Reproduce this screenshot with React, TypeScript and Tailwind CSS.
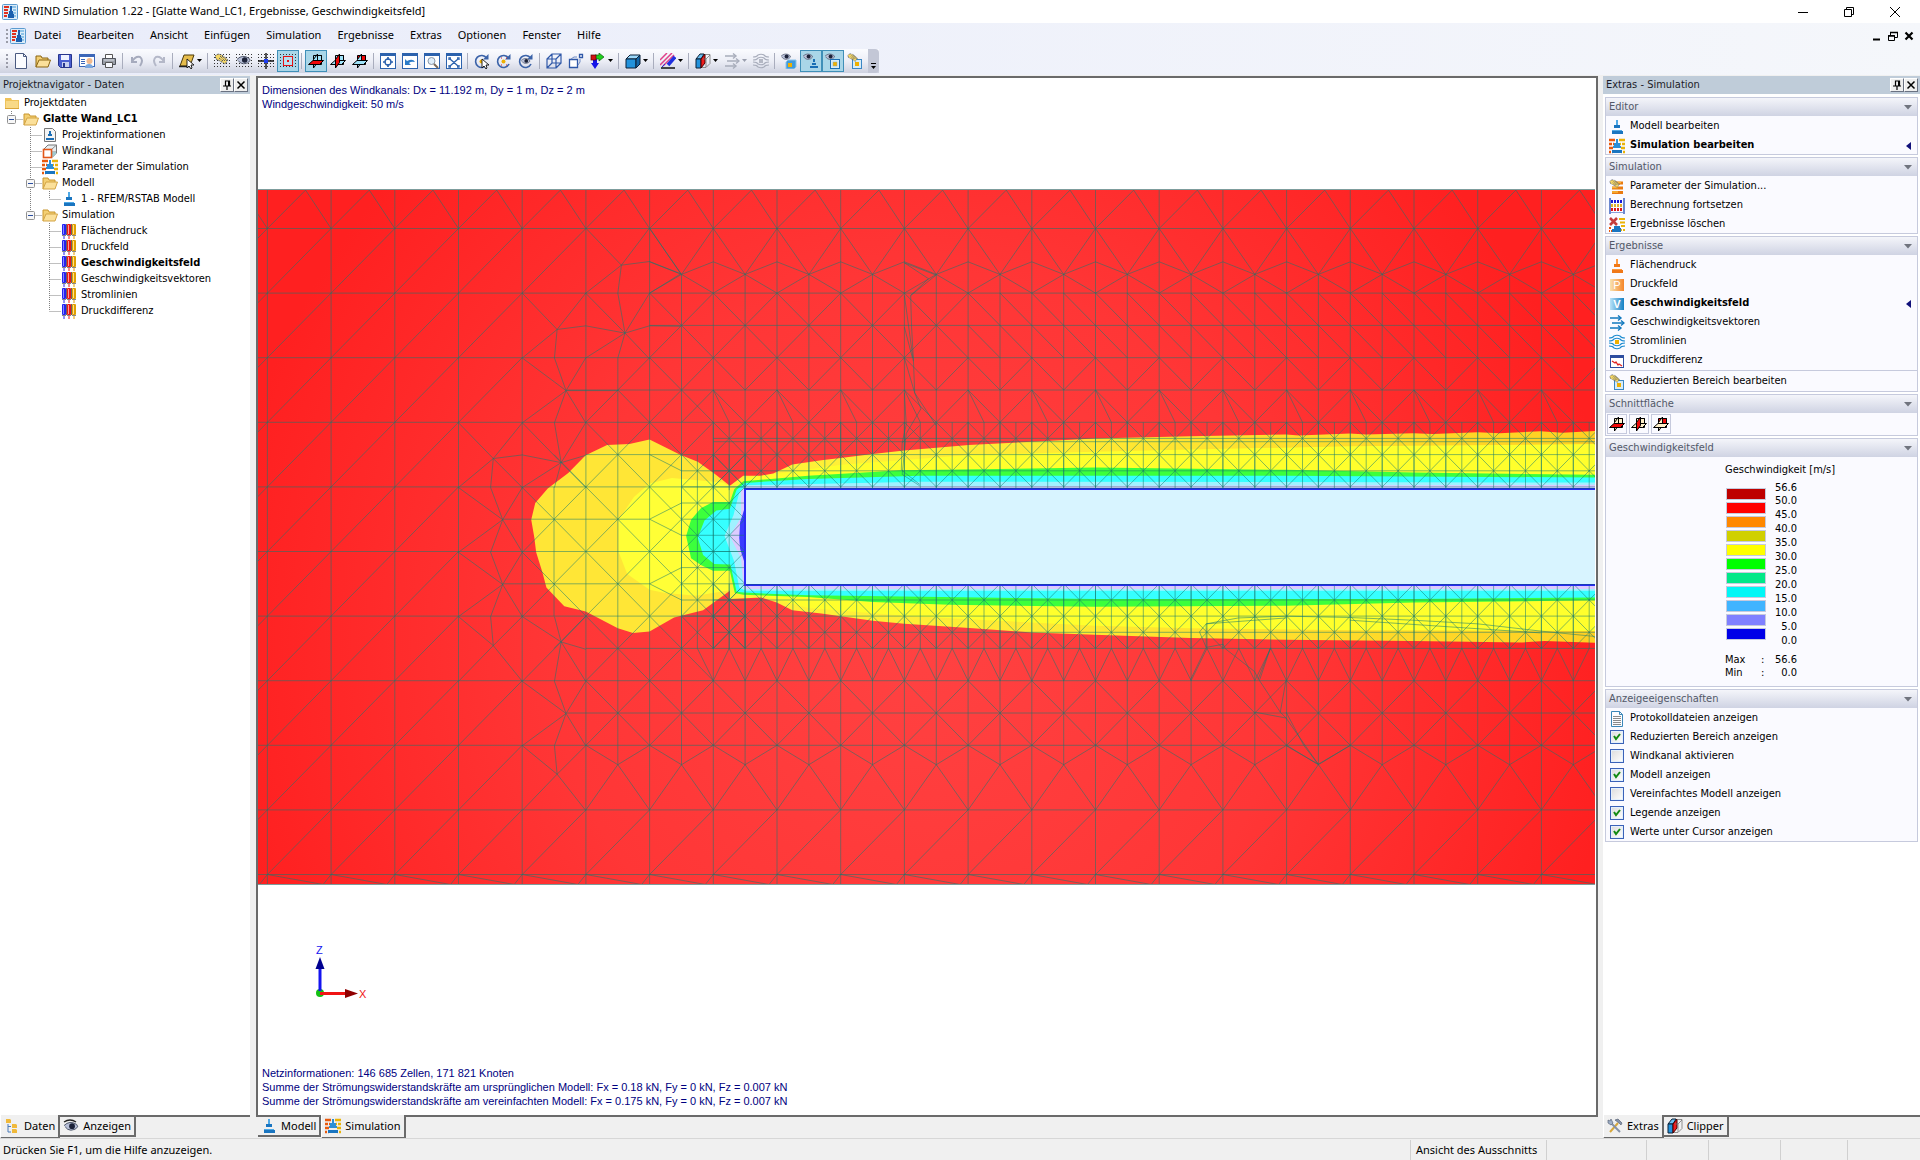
import type { ReactNode } from "react";

/* ---------- icons ---------- */

function Svg({ children, className = "size-4" }: { children: ReactNode; className?: string }) {
  return (
    <svg viewBox="0 0 16 16" className={"shrink-0 " + className} aria-hidden="true">
      {children}
    </svg>
  );
}

function AppLogo() {
  return (
    <Svg>
      <rect x="0.5" y="0.5" width="15" height="15" rx="1" fill="#dcecf8" stroke="#5b9bd0" />
      <path d="M2 3h5M2 6h4M2 9h4M2 12h3" stroke="#e0301e" strokeWidth="2" />
      <path d="M10 3h4M11 6h3M11 9h3M12 12h2" stroke="#8fc4e8" strokeWidth="2" />
      <path d="M8 2h2v5h1v3h1v4H6v-4h1V7h1z" fill="#1b5fae" />
    </Svg>
  );
}
function Pedestal({ color = "#1a75c0", light = "#4fa9e6" }: { color?: string; light?: string }) {
  return (
    <Svg>
      <rect x="7" y="1" width="2" height="5" fill={light} />
      <rect x="5" y="6" width="6" height="3" fill={color} />
      <path d="M3 11h10v1h1v3H3z" fill={color} />
      <rect x="3" y="11" width="10" height="1" fill={light} />
    </Svg>
  );
}
function Bricks() {
  return (
    <Svg>
      <path d="M0 2h6M0 6h3M4 6h1M0 10h4M0 14h2M3 14h1" stroke="#e8590c" strokeWidth="2.4" />
      <path d="M10 2h6M11 6h1M13 6h3M12 10h4M12 14h1M14 14h2" stroke="#eab308" strokeWidth="2.4" />
      <path d="M7 1h2v4h2v3h1v2H4V8h1V5h2z" fill="#2b8fd8" />
      <rect x="3" y="12" width="10" height="3" fill="#1a75c0" />
    </Svg>
  );
}
function FolderClosed() {
  return (
    <Svg>
      <path d="M1 3h6l1 2h7v9H1z" fill="#efc35a" />
      <path d="M2 6h12v8H2z" fill="#f8d987" />
      <path d="M1 13h14v1H1z" fill="#d9a53a" />
    </Svg>
  );
}
function FolderOpen({ strong = false }: { strong?: boolean }) {
  return (
    <Svg>
      <path d="M1 14V3h5l1 2h6v3" fill="#f3cf73" stroke={strong ? "#8a6510" : "#c9962f"} />
      <path d="M1 14 4 7h11.5L13 14z" fill="#fbe09a" stroke={strong ? "#8a6510" : "#d3a445"} />
    </Svg>
  );
}
function Spools() {
  return (
    <Svg>
      {[
        ["#2424f0", "#8a8aff", 1],
        ["#f01414", "#ff9a9a", 6],
        ["#e0a000", "#ffe08a", 11],
      ].map(([c, l, x]) => (
        <g key={String(x)}>
          <rect x={Number(x)} y="1" width="4" height="11" rx="1" fill={String(c)} />
          <rect x={Number(x) + 1} y="2" width="1" height="9" fill={String(l)} />
          <rect x={Number(x)} y="12" width="4" height="1" fill="#888" />
          <path d={`M${Number(x) + 2} 13v3`} stroke={String(c)} />
        </g>
      ))}
      <path d="M5.500 1v11M10.500 1v11" stroke="#222" strokeWidth="0.700" />
    </Svg>
  );
}
function Page({ lines = false, edge = "#4a5a80" }: { lines?: boolean; edge?: string }) {
  return (
    <Svg>
      <path d="M2.500 0.500h8l3 3v12h-11z" fill="#fbfcff" stroke={edge} />
      <path d="M10.500 0.500v3h3" fill="none" stroke={edge} />
      {lines && <path d="M4 5.500h8M4 7.500h8M4 9.500h8M4 11.500h8M4 13.500h8" stroke="#8a8a8a" />}
    </Svg>
  );
}
function PageInfo() {
  return (
    <Svg>
      <path d="M2.500 1.500h8l3 3v10h-11z" fill="#f4f4f4" stroke="#777" />
      <path d="M7 4h2v3h1v2H6V7h1zM4 11h8v2H4z" fill="#1a6db4" />
    </Svg>
  );
}
function WindTunnel() {
  return (
    <Svg>
      <path d="M1.500 6.500 6 2h8.500v8L10 14.500" fill="#e8eef0" stroke="#777" />
      <path d="M9.500 6.500 14.500 2M3 13l5-4h6" stroke="#888" fill="none" />
      <path d="M10 14v-5h4v2z" fill="#9fc9cf" />
      <rect x="1.500" y="6.500" width="8" height="8" fill="#fff" stroke="#e2571a" strokeWidth="1.600" />
    </Svg>
  );
}
const HAND = "M1 3 4 1l4 1 6 5-3 4-5-3-4-2z";
function HandShape() {
  return (
    <g>
      <path d={HAND} fill="#f5d765" />
      <path d={HAND} fill="none" stroke="#20305c" strokeDasharray="1 1" />
      <path d="m6 3 5 5M8 3l5 5M5 5l4 3" stroke="#20305c" strokeDasharray="1 1" />
    </g>
  );
}
function EyeShape() {
  return (
    <g>
      <path d="M0 4q5-5 11-1l1 2q-2 3-6 3-3 0-5-3" fill="#b8c0d8" stroke="#444c60" strokeWidth="0.800" />
      <circle cx="7" cy="4.500" r="2.500" fill="#1c2238" />
    </g>
  );
}
function Dots() {
  return (
    <path
      d="M0 1.500h16M0 4.500h16M0 7.500h16M0 10.500h16M0 13.500h16"
      stroke="#333"
      strokeDasharray="1 2"
    />
  );
}
function HandGrid() {
  return <Svg><Dots /><HandShape /></Svg>;
}
function EyeGrid() {
  return <Svg><Dots /><g transform="translate(1 2) scale(1.1)"><EyeShape /></g></Svg>;
}
function CrossGrid() {
  return <Svg><Dots /><path d="M8 0v16M0 8h16" stroke="#111" strokeWidth="1.400" /><rect x="6" y="6" width="4" height="4" fill="#1d3df0" /></Svg>;
}
function SnapGrid() {
  return <Svg><Dots /><rect x="3" y="3" width="10" height="10" fill="#b8ddee" /><rect x="3.500" y="3.500" width="9" height="9" fill="none" stroke="#e81010" /><rect x="7" y="7" width="2" height="2" fill="#e81010" /></Svg>;
}
const PLANES = ["M0.500 11.500 5 7.500h10.500l-4 4z", "M5.500 6.500 9.500 1v8.500l-4 5.500z", "M5.500 2.500h8v9h-8z"];
function Planes({ hot, base = "#9fe2f8" }: { hot: number; base?: string }) {
  const order = [2, 1, 0].filter((n) => n !== hot).concat(hot === 2 ? [] : [hot]);
  return (
    <Svg>
      {hot === 2 && <path d={PLANES[2]} fill="#f00808" stroke="#000" />}
      {order.map((n) => (
        <path key={n} d={PLANES[n]} fill={n === hot ? "#f00808" : base} stroke="#000" />
      ))}
      <path d="M9.500 2.500h4v5" fill="none" stroke="#000" />
    </Svg>
  );
}
function Save() {
  return <Svg><path d="M1.500 1.500h13v13h-11l-2-2z" fill="#4a5fd0" stroke="#26358c" /><rect x="4" y="2" width="8" height="5" fill="#eef2ff" /><rect x="5" y="9" width="7" height="5" fill="#c8d0f0" /><rect x="6" y="10" width="2" height="4" fill="#26358c" /></Svg>;
}
function Report() {
  return <Svg><rect x="0.500" y="1.500" width="15" height="12" fill="#fff" stroke="#3b66b8" /><path d="M1 3h14" stroke="#3b66b8" strokeWidth="2" /><path d="M2 6.500h4M2 8.500h4M2 10.500h4" stroke="#3b66b8" /><path d="M6 15q0-4 4-4t4 4z" fill="#7ba7dd" /><circle cx="10.500" cy="8" r="3" fill="#f1b98c" /></Svg>;
}
function Printer() {
  return <Svg><path d="M4.500 1.500h7v4h-7z" fill="#fff" stroke="#555" /><path d="M1.500 5.500h13v6h-13z" fill="#9a9fa8" stroke="#50545c" /><path d="M4.500 9.500h7v5h-7z" fill="#f7f9ff" stroke="#555" /><path d="M3 7h10" stroke="#d9dde4" /></Svg>;
}
function Undo() {
  return <Svg><path d="M3 4v5h5M3 9q3-6 8-5 4 3 0 9" fill="none" stroke="#a6abbd" strokeWidth="2" /></Svg>;
}
function Redo() {
  return <Svg><path d="M13 4v5H8M13 9q-3-6-8-5-4 3 0 9" fill="none" stroke="#b4b8c8" strokeWidth="2" /></Svg>;
}
function Cursor() {
  return <path d="M8 6v9l2-2 2 3 1-1-1-3h3z" fill="#fff" stroke="#111" strokeWidth="0.900" />;
}
function WorkPlane() {
  return <Svg><path d="M5 2h10l-4 11H1z" fill="#e6bd4c" stroke="#4d3b08" /><path d="M0 13.500h13" stroke="#222" strokeWidth="1.500" /><Cursor /></Svg>;
}
function Frame({ children }: { children: ReactNode }) {
  return <Svg><rect x="0.500" y="0.500" width="15" height="15" fill="#fff" stroke="#2c62ad" /><rect x="0" y="0" width="16" height="3" fill="#2c62ad" />{children}</Svg>;
}
function Fit() {
  return <Frame><circle cx="8" cy="9" r="3" fill="none" stroke="#2c62ad" strokeWidth="1.300" /><path d="M8 4v3M8 11v3M3 9h3M10 9h3" stroke="#2c62ad" strokeWidth="1.700" /></Frame>;
}
function ViewBack() {
  return <Frame><path d="M3 6v6h6l-2-2q2-2 6-1-2-4-8-1z" fill="#2c7cc9" /></Frame>;
}
function ZoomView() {
  return <Frame><circle cx="7.500" cy="8" r="3.500" fill="#dfeefa" stroke="#8a97a8" /><path d="m10 11 4 4" stroke="#7a6a5a" strokeWidth="2" /></Frame>;
}
function Extents() {
  return <Frame><path d="M3 7V5h2M11 5h2v2M13 12v2h-2M5 14H3v-2M4 6l8 7M12 6l-8 7" stroke="#2c62ad" strokeWidth="1.300" fill="none" /></Frame>;
}
function Rotate({ kind }: { kind: number }) {
  return (
    <Svg>
      <path d="M12.500 5A6 6 0 1 0 13 11" fill="none" stroke="#3a62a8" strokeWidth="1.600" />
      <path d="M14.500 1v5.500H9z" fill="#3a62a8" />
      {kind === 2 ? <g transform="translate(3 4.500) scale(0.75)"><EyeShape /></g> : <circle cx="7.500" cy="8.500" r="2" fill="#f0b000" />}
      {kind === 0 && <Cursor />}
      {kind === 1 && <path d="M5 5h1M10 5h1M5 12h1M10 12h1" stroke="#d02020" />}
    </Svg>
  );
}
function WireCube() {
  return <Svg><path d="M1 6h9v9H1zM6 1h9v9H6zM1 6l5-5M10 6l5-5M1 15l5-5M10 15l5-5" fill="none" stroke="#2f58a8" strokeWidth="1.200" /></Svg>;
}
function TwoCubes() {
  return <Svg><path d="M1.500 6.500h8v8h-8z" fill="#fff" stroke="#2f58a8" strokeWidth="1.300" /><path d="M11.500 1.500h3v3h-3z" fill="#fff" stroke="#2f58a8" strokeWidth="1.300" /><path d="M3 6 6 4h3M10 12l2-3V6" stroke="#6d8ac4" fill="none" /></Svg>;
}
function AxesArrows() {
  return <Svg><path d="M5 2h4v-2l5 4-5 4V6H5z" fill="#1ed01e" stroke="#116011" strokeWidth="0.700" /><path d="M3 6h4v4h2l-4 6-4-6h2z" fill="#1515e8" /><rect x="1" y="2" width="5" height="5" fill="#d41414" stroke="#500" strokeWidth="0.700" /></Svg>;
}
function SolidCube() {
  return <Svg><path d="M1 6 5 2h10l-4 4z" fill="#9bd8fa" stroke="#0b2038" /><path d="M1 6h10v9H1z" fill="#2292dc" stroke="#0b2038" /><path d="m11 6 4-4v9l-4 4z" fill="#1467a8" stroke="#0b2038" /></Svg>;
}
function Hatch() {
  return <Svg><path d="m0 7 7-7M0 12 12 0M3 13 14 2" stroke="#e0408a" strokeWidth="1.500" /><path d="m8 12 7-8" stroke="#2030e0" strokeWidth="3.500" /><path d="M1 15h14" stroke="#111" strokeWidth="1.500" /><path d="m2 14 3-3" stroke="#2030e0" /></Svg>;
}
function Clipper() {
  return <Svg><path d="M1 6 5 1h4L6 6z" fill="#6cc0f0" stroke="#0b2038" /><path d="M1 6h5v9H1z" fill="#2292dc" stroke="#0b2038" /><path d="m6 6 4-5v9l-4 5z" fill="#f01c1c" stroke="#400" /><path d="M10 1.500h5v9l-4 4H7M15 2l-4 4v8M11 6H8" fill="none" stroke="#777" strokeWidth="0.800" /></Svg>;
}
function Vectors({ color = "#1178be" }: { color?: string }) {
  return <Svg><path d="M1 3h10M3 8h12M1 13h10" stroke={color} strokeWidth="1.400" /><path d="m9 0.500 3 2.500-3 2.500M12 5.500 15 8l-3 2.500M9 10.500l3 2.500-3 2.500" fill="none" stroke={color} strokeWidth="1.400" /></Svg>;
}
function Streamlines({ color = "#1b8bd0", dot = "#f0b000" }: { color?: string; dot?: string }) {
  return <Svg><path d="M0 4q4 0 5-2 3-1.500 6 0 1 2 5 2M0 7q4 0 5-2 3-1.500 6 0 1 2 5 2M0 9q4 0 5 2 3 1.500 6 0 1-2 5-2M0 12q4 0 5 2 3 1.500 6 0 1-2 5-2" fill="none" stroke={color} strokeWidth="1.200" /><rect x="6" y="6" width="4" height="4" fill={dot} /></Svg>;
}
function EyeWith({ kind }: { kind: number }) {
  return (
    <Svg>
      <g transform="scale(0.8)"><EyeShape /></g>
      {kind === 0 && <><path d="M5 9l2-2h8v7l-2 2H5z" fill="#3f9bdc" stroke="#8fc4ea" /><rect x="7" y="10" width="4" height="4" fill="#f0b000" /></>}
      {kind === 1 && <path d="M10 6h2v3h-2zM9 10h4v2H9zM7 13h8v2H7z" fill="#1a6fb4" />}
      {kind === 2 && <><rect x="5.500" y="6.500" width="9" height="9" fill="#d6ecf8" stroke="#1a6fb4" /><rect x="8" y="9" width="4" height="4" fill="#f0b000" stroke="#8aa" strokeWidth="0.500" /></>}
    </Svg>
  );
}
function HandWith({ kind }: { kind: number }) {
  return (
    <Svg>
      {kind === 0 ? (
        <><path d="M6 4h8M3 9h11M3 13.500h11" stroke="#ea7a10" strokeWidth="3" /><path d="M6 3.500h6M3 8.500h6M3 13h6" stroke="#f8b638" strokeWidth="1.500" /></>
      ) : (
        <><rect x="5.500" y="6.500" width="9" height="9" fill="#d6ecf8" stroke="#3a86c4" /><rect x="8" y="9" width="4" height="4" fill="#f0b000" /></>
      )}
      <g transform="scale(0.75)"><HandShape /></g>
    </Svg>
  );
}
function Abacus() {
  return <Svg><path d="M1 0v16M15 0v16" stroke="#3b62c0" strokeWidth="1.500" /><path d="M2 3.500h12" stroke="#1a1ad8" strokeWidth="3" strokeDasharray="2 1" /><path d="M2 7.500h12" stroke="#e0b030" strokeWidth="3" strokeDasharray="2 1" /><path d="M2 11.500h12" stroke="#e01818" strokeWidth="3" strokeDasharray="2 1" /><path d="M2 14.500h12" stroke="#8aa0d8" /></Svg>;
}
function DeleteResults() {
  return <Svg><path d="M10 2h6M11 5.500h5M12 9h4M12 13h1M14 13h2" stroke="#eab308" strokeWidth="2" /><path d="M0 11h2M0 14h1M2 14h1" stroke="#e8590c" strokeWidth="2" /><path d="M5 9h6v2h1v4H3v-3h2z" fill="#1a75c0" /><path d="m1 1 7 7M8 1 1 8" stroke="#c43c3c" strokeWidth="2.600" /></Svg>;
}
function Letter({ children, from, to }: { children: string; from: string; to: string }) {
  return (
    <Svg>
      <defs>
        <linearGradient id={"tile" + children}><stop offset="0" stopColor={from} /><stop offset="1" stopColor={to} /></linearGradient>
      </defs>
      <rect x="1" y="2" width="14" height="12" fill={`url(#tile${children})`} />
      <text x="8" y="12" textAnchor="middle" fontSize="11" fill="#fff" fontFamily="Liberation Sans, sans-serif">{children}</text>
    </Svg>
  );
}
function DropChart() {
  return <Svg><rect x="1.500" y="2.500" width="13" height="12" fill="#fff" stroke="#2c4ca0" /><rect x="1" y="2" width="14" height="3" fill="#2c4ca0" /><path d="m3 8 3 2 1-1 2 3 1-1 3 2" fill="none" stroke="#e02020" strokeWidth="1.300" /></Svg>;
}
function TreeTab() {
  return <Svg><path d="M2 1h4l1 1v3H2zM8 6h4l1 1v3H8zM8 11h4l1 1v3H8z" fill="#f0b93a" /><path d="M4 6v8h3M4 8.500h3" stroke="#4b7bb8" fill="none" /></Svg>;
}
function EyeTab() {
  return <Svg><g transform="translate(1 3) scale(1.15)"><EyeShape /></g><path d="M1 4q6-4 12 0" stroke="#222" fill="none" strokeWidth="1.400" /></Svg>;
}
function Tools() {
  return <Svg><path d="m3 14 8-9" stroke="#d8a83c" strokeWidth="2" /><path d="m8 2 3-1 4 4-1 2-2-2z" fill="#8592a8" stroke="#4c566a" strokeWidth="0.600" /><path d="m5 6 8 8" stroke="#8592a8" strokeWidth="2" /><path d="M1 2v3l3 2 2-2-2-4-1 2z" fill="#9fb0c8" stroke="#4c566a" strokeWidth="0.600" /></Svg>;
}

/* ---------- small shared parts ---------- */

function PinClose() {
  const b = "flex size-[14px] items-center justify-center border border-t-white border-l-white border-r-gray-500 border-b-gray-500 bg-[#efefef]";
  return (
    <div className="flex">
      <button className={b} aria-label="Anheften">
        <svg viewBox="0 0 10 10" className="size-[10px]"><path d="M3.500 6V1h4v5M1 6h8M5 6v4" fill="none" stroke="#000" strokeWidth="1.200" /><path d="M6.500 1v5" stroke="#000" /></svg>
      </button>
      <button className={b} aria-label="Schließen">
        <svg viewBox="0 0 10 10" className="size-[10px]"><path d="m1.500 1.500 7 7M8.500 1.500l-7 7" stroke="#000" strokeWidth="1.500" /></svg>
      </button>
    </div>
  );
}
function DockHeader({ title }: { title: string }) {
  return (
    <div className="flex h-[18px] shrink-0 items-center justify-between bg-[#bfccd9] pr-[2px] pl-[3px] text-[11px] text-[#1c1c28]">
      <h2>{title}</h2>
      <PinClose />
    </div>
  );
}
function Tab({ icon, label, active = false }: { icon: ReactNode; label: string; active?: boolean }) {
  return (
    <button
      role="tab"
      aria-selected={active}
      className={
        "flex items-center gap-1 border-r-2 border-b-2 border-[#6a6a6a] bg-[#f0f0f0] px-[3px] text-xs font-['Noto_Sans',sans-serif] " +
        (active ? "-mt-[2px] h-[24px] border-l border-l-white" : "h-[20px]")
      }
    >
      {icon}
      <span className="text-[11px]">{label}</span>
    </button>
  );
}

/* ---------- toolbar ---------- */

type Tool = { label: string; icon: ReactNode; on?: boolean; drop?: boolean; dim?: boolean };
const TOOLS: Tool[][] = [
  [
    { label: "Neu", icon: <Page /> },
    { label: "Öffnen", icon: <FolderOpen strong /> },
    { label: "Speichern", icon: <Save /> },
    { label: "Projektmanager", icon: <Report /> },
    { label: "Drucken", icon: <Printer /> },
  ],
  [
    { label: "Rückgängig", icon: <Undo /> },
    { label: "Wiederherstellen", icon: <Redo /> },
  ],
  [{ label: "Arbeitsebene", icon: <WorkPlane />, drop: true }],
  [
    { label: "Raster bearbeiten", icon: <HandGrid /> },
    { label: "Raster anzeigen", icon: <EyeGrid /> },
    { label: "Ursprung", icon: <CrossGrid /> },
    { label: "Raster fangen", icon: <SnapGrid />, on: true },
  ],
  [
    { label: "Schnitt XY", icon: <Planes hot={0} />, on: true },
    { label: "Schnitt XZ", icon: <Planes hot={1} /> },
    { label: "Schnitt YZ", icon: <Planes hot={2} /> },
  ],
  [
    { label: "Ansicht zentrieren", icon: <Fit /> },
    { label: "Vorherige Ansicht", icon: <ViewBack /> },
    { label: "Zoom", icon: <ZoomView /> },
    { label: "Alles zeigen", icon: <Extents /> },
  ],
  [
    { label: "Drehen um Punkt", icon: <Rotate kind={0} /> },
    { label: "Drehen", icon: <Rotate kind={1} /> },
    { label: "Drehen um Auge", icon: <Rotate kind={2} /> },
  ],
  [
    { label: "Isometrie", icon: <WireCube /> },
    { label: "Perspektive", icon: <TwoCubes /> },
    { label: "Blickrichtung", icon: <AxesArrows />, drop: true },
  ],
  [{ label: "Darstellung", icon: <SolidCube />, drop: true }],
  [{ label: "Schraffur", icon: <Hatch />, drop: true }],
  [
    { label: "Clipper", icon: <Clipper />, drop: true },
    { label: "Vektoren", icon: <Vectors color="#a8adbb" />, drop: true, dim: true },
    { label: "Stromlinien", icon: <Streamlines color="#a8adbb" dot="#b4b8c4" /> },
  ],
  [
    { label: "Windkanal anzeigen", icon: <EyeWith kind={0} /> },
    { label: "Modell anzeigen", icon: <EyeWith kind={1} />, on: true },
    { label: "Bereich anzeigen", icon: <EyeWith kind={2} />, on: true },
    { label: "Bereich bearbeiten", icon: <HandWith kind={1} /> },
  ],
];

function Grip() {
  return (
    <svg viewBox="0 0 10 16" className="h-4 w-[10px] shrink-0" aria-hidden="true">
      <path d="M7 1v15" stroke="#9a9ca8" strokeWidth="2" strokeDasharray="2 2" />
    </svg>
  );
}

function Toolbar() {
  return (
    <div className="flex h-[27px] items-start pt-px">
      <div role="toolbar" className="flex h-6 items-center bg-linear-to-b from-[#fbfcff] via-[#eceef6] to-[#ced2e0]">
        <Grip />
        {TOOLS.map((group, gi) => (
          <div key={gi} className="flex items-center">
            {gi > 0 && <span className="mr-[3px] ml-[2px] h-4 w-px bg-[#a9adbd]" />}
            {group.map((t) => (
              <button
                key={t.label}
                title={t.label}
                aria-label={t.label}
                aria-pressed={t.on}
                className={
                  "flex h-[22px] items-center justify-center " +
                  (t.drop ? "w-[29px] " : "w-[22px] ") +
                  (t.on ? "border border-[#3f8fb8] bg-[#a9d6e8]" : "")
                }
              >
                {t.icon}
                {t.drop && (
                  <svg viewBox="0 0 7 4" className="ml-px h-1 w-[7px]"><path d="M1 0h5L3.500 3z" fill={t.dim ? "#9a9fae" : "#000"} /></svg>
                )}
              </button>
            ))}
          </div>
        ))}
        <button aria-label="Symbolleistenoptionen" className="ml-[2px] flex h-6 w-[11px] items-end justify-center rounded-r bg-[#c3c7d6] pb-1">
          <svg viewBox="0 0 7 6" className="h-[6px] w-[7px]"><path d="M1 0.500h5" stroke="#000" /><path d="M1 3h5L3.500 6z" fill="#000" /></svg>
        </button>
      </div>
    </div>
  );
}

/* ---------- project tree ---------- */

type Row = { cells: string; icon: ReactNode; text: string; bold?: boolean };
const TREE: Row[] = [
  { cells: "", icon: <FolderClosed />, text: "Projektdaten" },
  { cells: "R", icon: <FolderOpen />, text: "Glatte Wand_LC1", bold: true },
  { cells: " T", icon: <PageInfo />, text: "Projektinformationen" },
  { cells: " T", icon: <WindTunnel />, text: "Windkanal" },
  { cells: " T", icon: <Bricks />, text: "Parameter der Simulation" },
  { cells: " X", icon: <FolderOpen />, text: "Modell" },
  { cells: " IL", icon: <Pedestal />, text: "1 - RFEM/RSTAB Modell" },
  { cells: " R", icon: <FolderOpen />, text: "Simulation" },
  { cells: "  T", icon: <Spools />, text: "Flächendruck" },
  { cells: "  T", icon: <Spools />, text: "Druckfeld" },
  { cells: "  T", icon: <Spools />, text: "Geschwindigkeitsfeld", bold: true },
  { cells: "  T", icon: <Spools />, text: "Geschwindigkeitsvektoren" },
  { cells: "  T", icon: <Spools />, text: "Stromlinien" },
  { cells: "  L", icon: <Spools />, text: "Druckdifferenz" },
];
const BRANCH: Record<string, string> = {
  " ": "",
  I: "M9.500 0v16",
  T: "M9.500 0v16M9.500 8.500H21",
  L: "M9.500 0v8M9.500 8.500H21",
  R: "M9.500 0v8M9.500 8.500H21",
  X: "M9.500 0v16M9.500 8.500H21",
};
function Branch({ kind }: { kind: string }) {
  return (
    <svg viewBox="0 0 19 16" className="h-4 w-[19px] shrink-0 overflow-visible" aria-hidden="true">
      <path d={BRANCH[kind]} fill="none" stroke="#808080" strokeDasharray="1 1" />
      {(kind === "R" || kind === "X") && (
        <g>
          <rect x="5.500" y="4.500" width="8" height="8" rx="1" fill="#f7f7f7" stroke="#919191" />
          <path d="M7 8.500h5" stroke="#2b4fa0" />
        </g>
      )}
    </svg>
  );
}
function ProjectTree() {
  return (
    <ul role="tree" className="min-h-0 flex-1 bg-white pt-px pl-[2px]">
      {TREE.map((r) => (
        <li key={r.text} role="treeitem" className="flex h-4 items-center whitespace-nowrap">
          {r.cells.split("").map((c, i) => <Branch key={i} kind={c} />)}
          <button className={"ml-[2px] flex h-4 items-center gap-1 text-[11px] " + (r.bold ? "font-bold" : "")}>
            {r.icon}
            {r.text}
          </button>
        </li>
      ))}
    </ul>
  );
}

/* ---------- flow field ---------- */

const gx = (a: number) => 267.4 + 31.85 * a;
const gy = (b: number) => 228.5 + 32.3 * b;

function buildMesh(): string {
  const out: string[] = [];
  const line = (a1: number, b1: number, a2: number, b2: number) =>
    out.push(`M${gx(a1).toFixed(1)} ${gy(b1).toFixed(1)}L${gx(a2).toFixed(1)} ${gy(b2).toFixed(1)}`);
  const top = -1.19;
  const bottom = 20.31;
  const right = 42;

  for (let a = 0; a <= right; a += 2) line(a, top, a, bottom);
  for (let a = 11; a <= right; a += 2) line(a, a === 11 ? 5 : 1.42, a, 16.6);
  for (let b = 0; b <= 20; b += 2) line(-1, b, right, b);
  line(12, 3, right, 3);
  line(9.4, 5, right, 5);
  line(10, 7, right, 7);
  line(7.4, 9, 12, 9);
  line(7.4, 11, 12, 11);
  line(10, 13, right, 13);
  line(9.4, 15, right, 15);
  line(9, 8, 9, 12);

  for (let i = -1; i <= 20; i++) {
    const a = i * 2;
    line(a, 0, a + 1.2, top);
    line(a + 1.2, top, a + 2, 0);
    line(a, 20, a + 1.75, bottom);
    line(a + 1.75, bottom, a + 2, 20);
    line(a, 20, a + 2, 18);
    for (let j = 0; j <= 8; j++) {
      const plain = i <= 2 || (i === 3 && (j < 3 || j > 6)) || (i === 4 && j === 0);
      if (plain) line(a, j * 2 + 2, a + 2, j * 2);
    }
    if (i >= 6) {
      line(a, 0, a + 1, 1.42);
      line(a + 1, 1.42, a + 2, 0);
      line(a, 1.03, a + 1, 1.42);
      line(a + 1, 1.42, a + 2, 1.03);
      line(a, 2, a + 1, 1.42);
      line(a + 1, 1.42, a + 2, 2);
    }
    if (i >= 5) {
      line(a, 16, a + 1, 16.6);
      line(a + 1, 16.6, a + 2, 16);
      line(a, 18, a + 1, 16.6);
      line(a + 1, 16.6, a + 2, 18);
    }
    if (i >= 7) {
      line(a, 5, a + 0.5, 6);
      line(a, 5, a + 1, 6);
      line(a, 5, a - 1, 6);
      for (const d of [-0.5, 0.5]) {
        line(a, 14, a + d, 13);
        line(a + 1, 14, a + 1 + d, 13);
      }
    }
  }

  const diag = (a: number, b: number, s: number, falling: boolean) =>
    falling ? line(a, b, a + s, b + s) : line(a, b + s, a + s, b);
  const starts: Record<number, number> = { 2: 12, 3: 12, 4: 11, 5: 10, 6: 10, 13: 10, 14: 10, 15: 10 };
  for (let b = 2; b < 16; b++) {
    const from = starts[b] ?? 9;
    for (let a = from; a < right; a++) {
      if (b >= 5 && b <= 13 && a >= 14) continue;
      if (b >= 7 && b <= 12 && a >= 13) continue;
      diag(a, b, 1, (b < 4 && a >= 22) || (a + b) % 2 === 0);
    }
  }

  for (let c = 28; c < right * 2; c++) {
    line(c / 2, 6, c / 2, 8.1);
    line(c / 2, 11, c / 2, 13);
    for (const r of [12, 13, 14, 15, 22, 23, 24, 25]) diag(c / 2, r / 2, 0.5, (c + r) % 2 === 0);
  }
  for (const b of [6.5, 7.5, 11.5, 12.5]) line(14, b, right, b);
  line(14, 6.6, right, 6.6);
  for (let c = 26; c <= 30; c++) line(c / 2, 7, c / 2, 13);
  for (let r = 15; r <= 24; r++) line(13, r / 2, 15, r / 2);
  for (let c = 26; c < 30; c++) for (let r = 14; r < 26; r++) diag(c / 2, r / 2, 0.5, (c + r) % 2 === 0);
  for (const b of [7, 9, 11]) {
    line(12, b, 13, b + 0.5);
    if (b > 7) line(12, b, 13, b - 0.5);
  }
  return out.join("");
}
const MESH = buildMesh();

/* Irregular transition edges, given in the local frame set by LOCAL. */
const LOCAL = "translate(250 180) scale(0.4464 0.4529)";
const TRANSITION =
  "M610 250 688 330 752 322 840 338 895 322 965 323M752 250 688 330 682 393 708 465 752 393M752 250 840 338 895 250M824 250 840 338 824 393 824 465M824 250 832 188 895 180 965 207" +
  "M752 106 832 188 895 106 965 207M752 250 832 188M895 250 965 207M610 393 688 330M610 393 708 465H824M840 338 752 393M840 338 895 395M708 465 682 536M708 465 752 536M610 536 708 465" +
  "M682 536 697 624 752 608M610 536 697 624 610 607 545 615M467 536 545 615 610 536M545 615 539 679 566 750M467 679 545 615 610 679M697 624 682 679M697 624 610 679M697 624 752 679M697 624 752 536" +
  "M467 679 566 750 610 679 682 750M610 822 682 750M467 822 566 750 610 822 566 893 467 822M566 750 539 822 566 893 539 964 545 1028M467 964 566 893 610 964 682 893 610 822" +
  "M467 964 545 1028 610 964 697 1020 752 964M467 1107 545 1028 610 1107 697 1020M697 1020 682 964M697 1020 752 1036M697 1020 682 1107 708 1178 682 1249 688 1312M697 1020 752 1107 708 1178 752 1249 688 1312" +
  "M610 1107 708 1178 610 1249 688 1312 752 1392M688 1312 610 1392" +
  "M1466 183 1520 218 1480 255 1482 325 1486 393 1489 470 1503 505 1470 560 1461 650 1500 675M1466 183 1537 210 1480 255M1466 255 1486 400M1466 325 1484 393M1466 393 1489 470 1537 542M1466 470 1470 540 1461 580 1459 640 1500 672M1500 542 1461 580" +
  "M2107 1103 2142 1032 2127 998 2142 980 2214 967 2321 963 2464 966 2606 972 2750 980 2891 996 3014 1008M2142 980V1032L2180 1025 2185 1035 2250 1085 2260 1103 2308 1175 2321 1188 2393 1290M2286 1033 2258 1103M2286 1033 2262 1103M2321 1103 2308 1175M2321 1175 2361 1249 2393 1290 2464 1249M2251 1175 2321 1188M2321 1249 2393 1290M2142 980 2321 967M2464 972 2891 1000";

function FlowField() {
  return (
    <svg
      viewBox="258 78 1338 1037"
      preserveAspectRatio="xMidYMid slice"
      className="absolute inset-0 size-full"
      role="img"
      aria-label="Geschwindigkeitsfeld im Schnitt durch den Windkanal"
    >
      <defs>
        <radialGradient id="red" gradientUnits="userSpaceOnUse" cx="920" cy="640" r="740">
          <stop offset="0" stopColor="#ff4242" />
          <stop offset="0.500" stopColor="#ff3636" />
          <stop offset="0.950" stopColor="#ff2020" />
        </radialGradient>
        <linearGradient id="orange" gradientUnits="userSpaceOnUse" x1="1150" y1="0" x2="3014" y2="0">
          <stop offset="0" stopColor="#fff238" />
          <stop offset="0.400" stopColor="#ffe832" />
          <stop offset="1" stopColor="#ffcf22" />
        </linearGradient>
        <clipPath id="tunnel"><rect x="258" y="190" width="1337" height="694" /></clipPath>
      </defs>
      <g clipPath="url(#tunnel)">
        <rect x="258" y="190" width="1337" height="694" fill="url(#red)" />
        <g transform={LOCAL}>
          <path fill="#ffe636" d="M895 573 965 607 1003 622 1040 648 1075 675V907L1015 950 950 966 895 997 858 1000 824 990 752 953 704 941 664 900 655 866 641 822 637 790 630 750 639 713 667 681 713 647 752 608 800 585 850 583Z" />
          <path fill="#ffff36" d="M826 750 860 700 895 670 945 658 1060 668 1080 680V905L1000 918 930 912 895 905 845 870 826 822Z" />
          <path fill="url(#orange)" d="M1075 675 1105 653H1145L1172 648 1215 628 1280 619 1323 614 1395 605 1466 597 1610 585 1751 578 1893 571 2107 566 2321 562 2350 564 2464 560 2500 562 2606 559 2650 561 2750 557 2800 559 2891 555 2940 558 3020 554V1022L2900 1018 2850 1021 2606 1018 2321 1015 2107 1011 1893 1004 1751 999 1620 990 1466 980 1395 973 1280 957 1215 950 1180 933 1145 922 1075 925Z" />
          <path fill="#ffff2c" d="M1085 690 1108 658 1200 646 1330 628 1466 618 1610 607 1893 600 2107 595 2464 588 3020 583V996L2464 994 2107 990 1893 984 1610 970 1466 962 1250 945 1150 918 1085 912Z" />
          <path fill="#3cff3c" d="M977 786 988 750 1010 725 1037 711H1075L1085 682 1105 665 1180 659 1250 653 1395 645 1456 641 1893 635 2321 640 2606 646 3020 651V928L2606 933 2321 940 1893 942 1568 938 1395 932 1250 921 1105 916 1086 912 1075 863H1037L1010 850 988 835Z" />
          <path fill="#36ffff" d="M1003 790 1018 752 1045 730 1075 726 1090 684 1108 669 1250 660 1500 653H2321L3020 657V922L2606 925H1893L1250 917 1105 911 1090 909 1076 849 1040 848 1015 828Z" />
          <path fill="#a0f2ff" d="M1083 740 1096 690 1110 674 1500 666 3020 668V907H1110L1096 900 1084 840 1063 786Z" />
          <path fill="#dccbff" d="M1075 786 1100 745V686L1112 677 3020 673V903H1106L1100 835Z" />
          <path fill="#3a3aff" d="M1108 725 1098 755 1096 790 1098 815 1108 845Z" />
        </g>
        <g fill="none" stroke="#14786f" strokeOpacity="0.520" strokeWidth="1">
          <path d={MESH} />
          <path d={TRANSITION} transform={LOCAL} vectorEffect="non-scaling-stroke" />
        </g>
        <rect x="744" y="488" width="860" height="98" fill="#2a2af2" />
        <rect x="746" y="490" width="860" height="94" fill="#d8f4ff" />
        <path d="M744 488.500H1600M746 584.500H1600" stroke="#0c4a90" strokeOpacity="0.600" />
      </g>
      <path d="M258 189.500H1595M258 884.500H1595" stroke="#7d9c9c" />
      <g>
        <circle cx="320" cy="993" r="4" fill="#14c014" />
        <path d="M320 991v-24" stroke="#1414f0" strokeWidth="3" />
        <path d="m320 957 4.500 12h-9z" fill="#000090" />
        <path d="M320 993.500h26" stroke="#f01414" strokeWidth="3" />
        <path d="m358 993.500-13-4.500v9z" fill="#900000" />
        <text x="316" y="954" fontSize="11" fill="#1414f0" fontFamily="Liberation Sans, sans-serif">Z</text>
        <text x="359" y="998" fontSize="11" fill="#f01414" fontFamily="Liberation Sans, sans-serif">X</text>
      </g>
    </svg>
  );
}

/* ---------- right panel ---------- */

function Group({ title, children }: { title: string; children: ReactNode }) {
  return (
    <section className="border border-[#c6cadd] bg-[#fafaff]">
      <button className="flex h-[18px] w-full items-center justify-between bg-linear-to-b from-[#f4f5fa] to-[#cfd3e3] pr-[5px] pl-[3px] text-[11px] text-[#525868]">
        <span>{title}</span>
        <svg viewBox="0 0 8 5" className="h-[5px] w-2"><path d="M0 0h8L4 4.500z" fill="#70747e" /></svg>
      </button>
      {children}
    </section>
  );
}
function Action({ icon, label, current = false }: { icon: ReactNode; label: string; current?: boolean }) {
  return (
    <button className={"flex h-[19px] w-full items-center gap-[5px] pt-[2px] pr-[5px] pl-[3px] text-[11px] " + (current ? "font-bold" : "")}>
      {icon}
      <span className="flex-1 text-left">{label}</span>
      {current && <svg viewBox="0 0 6 8" className="h-2 w-[6px]"><path d="M5 0v8L0 4z" fill="#10107a" /></svg>}
    </button>
  );
}
function Check({ label, on }: { label: string; on: boolean }) {
  return (
    <label className="flex h-[19px] items-center gap-[6px] pt-px pl-1 text-[11px]">
      <span className="relative flex size-[14px]">
        <input type="checkbox" defaultChecked={on} className="peer size-[14px] appearance-none border border-[#3b62b8] bg-linear-to-br from-[#dcdcdc] to-white shadow-[inset_0_0_0_1px_#e4f0fc]" />
        <svg viewBox="0 0 14 14" className="pointer-events-none absolute inset-0 hidden size-[14px] peer-checked:block"><path d="m4 6 2 3 4-5" fill="none" stroke="#128a12" strokeWidth="2" /></svg>
      </span>
      {label}
    </label>
  );
}
const LEGEND = ["#be0000", "#ff0000", "#ff8800", "#d0d000", "#ffff00", "#00ff00", "#00e888", "#00f6f6", "#40b4ff", "#8080ff", "#0000e8"];
const VALUES = ["50.0", "45.0", "40.0", "35.0", "30.0", "25.0", "20.0", "15.0", "10.0", "5.0", "0.0"];
const CHECKS: [string, boolean][] = [
  ["Reduzierten Bereich anzeigen", true],
  ["Windkanal aktivieren", false],
  ["Modell anzeigen", true],
  ["Vereinfachtes Modell anzeigen", false],
  ["Legende anzeigen", true],
  ["Werte unter Cursor anzeigen", true],
];

function Legend() {
  return (
    <div className="flex h-[229px] flex-col pt-[6px] pl-[119px] text-[11px] leading-[14px]">
      <h3>Geschwindigkeit [m/s]</h3>
      <div className="mt-1 flex">
        <div className="flex flex-col gap-[2px] pt-[7px] pl-px">
          {LEGEND.map((c) => (
            <span key={c} className="h-3 w-10 border border-[#c6cadd]" style={{ backgroundColor: c }} />
          ))}
        </div>
        <div className="w-[31px] text-right">
          <div className="h-[13px]">56.6</div>
          {VALUES.map((v) => <div key={v} className="h-[14px]">{v}</div>)}
        </div>
      </div>
      <dl className="mt-[5px] grid w-[72px] grid-cols-[36px_4px_32px] leading-[13px]">
        <dt>Max</dt><dd>:</dd><dd className="text-right">56.6</dd>
        <dt>Min</dt><dd>:</dd><dd className="text-right">0.0</dd>
      </dl>
    </div>
  );
}

function ExtrasPanel() {
  return (
    <div className="flex min-h-0 flex-1 flex-col gap-[2px] bg-white pt-[3px] pr-[2px] pl-[2px]">
      <Group title="Editor">
        <Action icon={<Pedestal />} label="Modell bearbeiten" />
        <Action icon={<Bricks />} label="Simulation bearbeiten" current />
      </Group>
      <Group title="Simulation">
        <Action icon={<HandWith kind={0} />} label="Parameter der Simulation..." />
        <Action icon={<Abacus />} label="Berechnung fortsetzen" />
        <Action icon={<DeleteResults />} label="Ergebnisse löschen" />
      </Group>
      <Group title="Ergebnisse">
        <Action icon={<Pedestal color="#f07818" light="#ff9a40" />} label="Flächendruck" />
        <Action icon={<Letter from="#f9e2b0" to="#f5862a">P</Letter>} label="Druckfeld" />
        <Action icon={<Letter from="#b8e2f8" to="#1580c4">V</Letter>} label="Geschwindigkeitsfeld" current />
        <Action icon={<Vectors />} label="Geschwindigkeitsvektoren" />
        <Action icon={<Streamlines />} label="Stromlinien" />
        <Action icon={<DropChart />} label="Druckdifferenz" />
        <div className="mt-px border-t border-[#c6cadd] pb-px">
          <Action icon={<HandWith kind={1} />} label="Reduzierten Bereich bearbeiten" />
        </div>
      </Group>
      <Group title="Schnittfläche">
        <div className="flex h-[22px] items-center gap-[2px] pl-px">
          {[0, 1, 2].map((n) => (
            <button key={n} aria-label={"Schnittfläche " + (n + 1)} className="flex size-5 items-center justify-center border border-[#c6cadd]">
              <Planes hot={n} base="#fff0c8" />
            </button>
          ))}
        </div>
      </Group>
      <Group title="Geschwindigkeitsfeld"><Legend /></Group>
      <Group title="Anzeigeeigenschaften">
        <Action icon={<Page lines edge="#3a86b8" />} label="Protokolldateien anzeigen" />
        {CHECKS.map(([label, on]) => <Check key={label} label={label} on={on} />)}
      </Group>
    </div>
  );
}

/* ---------- window ---------- */

const MENU = ["Datei", "Bearbeiten", "Ansicht", "Einfügen", "Simulation", "Ergebnisse", "Extras", "Optionen", "Fenster", "Hilfe"];
const tabStrip = "flex h-[23px] shrink-0 items-start border-t-2 border-[#6a6a6a]";

export default function App() {
  return (
    <div className="flex h-screen flex-col overflow-hidden bg-[#f0f0f0] text-black font-['DejaVu_Sans_Condensed','DejaVu_Sans',sans-serif]">
      <header className="shrink-0 font-['Noto_Sans',sans-serif]">
        <div className="flex h-[23px] items-center bg-white pl-[2px]">
          <AppLogo />
          <h1 className="ml-[5px] flex-1 text-[11px]">RWIND Simulation 1.22 - [Glatte Wand_LC1, Ergebnisse, Geschwindigkeitsfeld]</h1>
          <div className="flex pr-[2px]">
            <button aria-label="Minimieren" className="flex h-5 w-[46px] items-center justify-center"><svg viewBox="0 0 10 10" className="size-[10px]"><path d="M0 5.500h10" stroke="#000" /></svg></button>
            <button aria-label="Verkleinern" className="flex h-5 w-[46px] items-center justify-center"><svg viewBox="0 0 10 10" className="size-[10px]"><path d="M0.500 2.500h7v7h-7zM2.500 2.500v-2h7v7h-2" fill="none" stroke="#000" /></svg></button>
            <button aria-label="Schließen" className="flex h-5 w-[46px] items-center justify-center"><svg viewBox="0 0 10 10" className="size-[10px]"><path d="m0 0 10 10M10 0 0 10" stroke="#000" /></svg></button>
          </div>
        </div>
        <div className="bg-linear-to-r from-[#e9ecfa] to-[#f5f7fb]">
          <div className="flex h-[25px] items-center">
            <Grip />
            <AppLogo />
            <nav className="flex flex-1">
              {MENU.map((m) => <button key={m} className="px-2 text-[11px]">{m}</button>)}
            </nav>
            <div className="flex gap-[6px] pr-[6px]">
              <button aria-label="Dokument minimieren"><svg viewBox="0 0 10 10" className="size-[10px]"><path d="M1 8.500h7" stroke="#000" strokeWidth="2" /></svg></button>
              <button aria-label="Dokument verkleinern"><svg viewBox="0 0 10 10" className="size-[10px]"><path d="M0.500 4.500h6v5h-6zM2.500 4V1.500h7v5H7" fill="none" stroke="#000" /><path d="M0 5h7M2 1.500h8" stroke="#000" strokeWidth="1.500" /></svg></button>
              <button aria-label="Dokument schließen"><svg viewBox="0 0 10 10" className="size-[10px]"><path d="m1.500 1.500 7 7M8.500 1.500l-7 7" stroke="#000" strokeWidth="2.200" /></svg></button>
            </div>
          </div>
          <Toolbar />
        </div>
      </header>

      <div className="flex min-h-0 flex-1 pt-px">
        <aside className="flex w-[250px] shrink-0 flex-col">
          <DockHeader title="Projektnavigator - Daten" />
          <ProjectTree />
          <div role="tablist" className={tabStrip}>
            <Tab icon={<TreeTab />} label="Daten" active />
            <Tab icon={<EyeTab />} label="Anzeigen" />
          </div>
        </aside>

        <main className="mr-[5px] ml-[6px] flex min-w-0 flex-1 flex-col">
          <div className="relative flex min-h-0 flex-1 flex-col border-2 border-b-0 border-[#6a6a6a] bg-white">
            <FlowField />
            <div className="relative flex flex-1 flex-col justify-between pt-[5px] pb-[7px] pl-1 text-[11px] leading-[14px] text-[#000080] font-['Liberation_Sans',sans-serif]">
              <div>
                <p>Dimensionen des Windkanals: Dx = 11.192 m, Dy = 1 m, Dz = 2 m</p>
                <p>Windgeschwindigkeit: 50 m/s</p>
              </div>
              <div>
                <p>Netzinformationen: 146 685 Zellen, 171 821 Knoten</p>
                <p>Summe der Strömungswiderstandskräfte am ursprünglichen Modell: Fx = 0.18 kN, Fy = 0 kN, Fz = 0.007 kN</p>
                <p>Summe der Strömungswiderstandskräfte am vereinfachten Modell: Fx = 0.175 kN, Fy = 0 kN, Fz = 0.007 kN</p>
              </div>
            </div>
          </div>
          <div role="tablist" className={tabStrip + " pl-[2px]"}>
            <Tab icon={<Pedestal />} label="Modell" />
            <Tab icon={<Bricks />} label="Simulation" active />
          </div>
        </main>

        <aside className="flex w-[317px] shrink-0 flex-col">
          <DockHeader title="Extras - Simulation" />
          <ExtrasPanel />
          <div role="tablist" className={tabStrip}>
            <Tab icon={<Tools />} label="Extras" active />
            <Tab icon={<Clipper />} label="Clipper" />
          </div>
        </aside>
      </div>

      <footer className="flex h-[22px] shrink-0 items-center border-t border-[#d7d7d7] pt-px text-[11px] font-['Noto_Sans',sans-serif]">
        <span className="flex-1 pl-[3px]">Drücken Sie F1, um die Hilfe anzuzeigen.</span>
        <span className="h-5 w-[136px] border-l border-[#d0d0d0] pl-[5px] leading-5">Ansicht des Ausschnitts</span>
        <span className="h-5 w-[100px] border-l border-[#d0d0d0]" />
        <span className="h-5 w-[62px] border-l border-[#d0d0d0]" />
        <span className="h-5 w-[72px] border-l border-[#d0d0d0]" />
        <span className="h-5 w-[67px] border-l border-[#d0d0d0]" />
        <span className="h-5 w-[73px] border-l border-[#d0d0d0]" />
      </footer>
    </div>
  );
}
